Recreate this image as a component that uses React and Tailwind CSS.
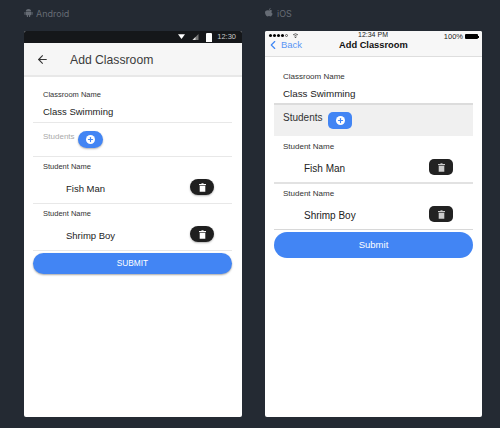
import { ArrowLeft, ChevronLeft, Plus } from "lucide-react";

function AddButton({ className }) {
  return (
    <div className={`flex items-center justify-center bg-[#4285f4] ${className}`}>
      <div className="flex h-[9px] w-[9px] items-center justify-center rounded-full bg-white">
        <Plus className="h-[7px] w-[7px] text-[#4285f4]" strokeWidth={4} />
      </div>
    </div>
  );
}

function TrashIcon({ color }) {
  return (
    <svg viewBox="0 0 10 12" className="h-[9px] w-[7px]" fill={color}>
      <rect x="0" y="1" width="10" height="1.6" />
      <rect x="3.5" y="0" width="3" height="1.5" />
      <path d="M1 3.4h8V12H1z" />
    </svg>
  );
}

function AndroidPhone() {
  return (
    <div className="h-[386px] w-[218px] overflow-hidden rounded-[2px] bg-white">
      <div className="flex h-3 items-center justify-end bg-[#15171a] pr-[6px]">
        <svg viewBox="0 0 10 8" className="h-[6px] w-[7px]"><path d="M0 0h10L5 7z" fill="#fff" /></svg>
        <svg viewBox="0 0 8 8" className="ml-[7px] h-[6px] w-[7px]"><path d="M0 8L8 0v8z" fill="#777" /><path d="M0 8l4-4v4z" fill="#ddd" /></svg>
        <div className="ml-[7px] h-[9px] w-[6px] rounded-t-[1px] bg-white" />
        <span className="ml-[5px] text-[7.5px] leading-none text-[#c8c8c8]">12:30</span>
      </div>
      <div className="flex h-[34px] items-center border-b-2 border-[#e8e8e8] bg-[#f6f6f6] pl-3">
        <ArrowLeft className="h-[13px] w-[13px] text-[#333]" strokeWidth={2} />
        <span className="mt-[2px] ml-[21px] text-[12.2px] font-medium text-[#3b3b3b]">Add Classroom</span>
      </div>
      <div className="flex flex-col pr-[10px] pl-[9px]">
        <div className="flex h-[46px] flex-col justify-end border-b border-[#e8e8e8] pb-[3px] pl-[10px]">
          <span className="text-[7.5px] leading-[12px] text-[#333]">Classroom Name</span>
          <span className="mt-[4px] text-[9.5px] leading-[14px] text-[#222]">Class Swimming</span>
        </div>
        <div className="flex h-[34px] items-start border-b border-[#e8e8e8] pt-[8px] pl-[10px]">
          <span className="text-[8px] leading-[12px] text-[#aaa]">Students</span>
          <AddButton className="ml-[3px] h-[17px] w-[25px] rounded-full shadow-[0_1px_2px_rgba(0,0,0,0.3)]" />
        </div>
        {["Fish Man", "Shrimp Boy"].map((name) => (
          <div key={name} className="h-[47px] border-b border-[#e8e8e8] pt-[4px]">
            <div className="pl-[10px] text-[7.5px] leading-[12px] text-[#333]">Student Name</div>
            <div className="mt-[3px] flex h-[22px] items-center justify-between pr-[18px] pl-[33px]">
              <span className="mt-[4px] text-[9.5px] text-[#222]">{name}</span>
              <div className="flex h-4 w-6 items-center justify-center rounded-full bg-[#1f1f1f] shadow-[0_1px_2px_rgba(0,0,0,0.3)]">
                <TrashIcon color="#fff" />
              </div>
            </div>
          </div>
        ))}
        <div className="mt-[2px] flex h-[21px] items-center justify-center rounded-full bg-[#4285f4] text-[8.3px] text-white shadow-[0_1px_2px_rgba(0,0,0,0.35)]">
          SUBMIT
        </div>
      </div>
    </div>
  );
}

function IosPhone() {
  return (
    <div className="h-[386px] w-[217px] overflow-hidden rounded-[2px] bg-white">
      <div className="relative h-[26px] border-b border-[#dedede] bg-[#f7f7f7]">
        <div className="absolute top-[2px] left-[4px] flex items-center gap-[1px]">
          <span className="h-[3px] w-[3px] rounded-full bg-black" />
          <span className="h-[3px] w-[3px] rounded-full bg-black" />
          <span className="h-[3px] w-[3px] rounded-full bg-black" />
          <span className="h-[3px] w-[3px] rounded-full bg-black" />
          <span className="h-[3px] w-[3px] rounded-full border-[0.5px] border-[#555]" />
          <svg viewBox="0 0 10 8" className="ml-[3px] h-[5px] w-[7px]" fill="none" stroke="#333" strokeWidth="1.2"><path d="M1 3a6 6 0 0 1 8 0M3 5a3 3 0 0 1 4 0" /><circle cx="5" cy="7" r="0.6" fill="#333" /></svg>
        </div>
        <span className="absolute top-0 left-[93px] whitespace-nowrap text-[7px] leading-[8px] text-[#222]">12:34 PM</span>
        <div className="absolute top-[2px] right-[3px] flex items-center gap-[2px]">
          <span className="text-[7.5px] leading-[7px] text-[#222]">100%</span>
          <span className="h-[5px] w-[13px] rounded-[1px] bg-black" />
          <span className="-ml-[2px] h-[2px] w-[1px] bg-black" />
        </div>
        <ChevronLeft className="absolute top-[7px] left-[1px] h-[14px] w-[14px] text-[#3f87f5]" strokeWidth={2} />
        <span className="absolute top-[8px] left-[16px] text-[9.5px] leading-[12px] text-[#5a96f5]">Back</span>
        <span className="absolute top-[8px] left-[74px] text-[9.3px] leading-[12px] font-semibold text-[#111]">Add Classroom</span>
      </div>
      <div className="flex flex-col px-[9px]">
        <div className="flex h-[48px] flex-col justify-end border-b-2 border-[#dcdcdc] pb-[2px] pl-[9px]">
          <span className="text-[8px] leading-[12px] text-[#333]">Classroom Name</span>
          <span className="mt-[4px] text-[9.8px] leading-[14px] text-[#222]">Class Swimming</span>
        </div>
        <div className="flex h-[31px] items-start bg-[#f0f0f0] pt-[6px] pl-[9px]">
          <span className="text-[10px] leading-[13px] text-[#333]">Students</span>
          <AddButton className="mt-[1px] ml-[6px] h-[17px] w-[24px] rounded-[5px]" />
        </div>
        <div className="h-[48px] border-b-2 border-[#e2e2e2] pt-[5px]">
          <StudentRow name="Fish Man" />
        </div>
        <div className="h-[46px] border-b border-[#d8d8d8] pt-[4px]">
          <StudentRow name="Shrimp Boy" />
        </div>
        <div className="mt-[2px] flex h-[26px] items-center justify-center rounded-full bg-[#4285f4] text-[9.5px] text-white">
          Submit
        </div>
      </div>
    </div>
  );
}

function StudentRow({ name }) {
  return (
    <>
      <div className="pl-[9px] text-[8px] leading-[12px] text-[#333]">Student Name</div>
      <div className="mt-[3px] flex h-[22px] items-center justify-between pr-[20px] pl-[30px]">
        <span className="mt-[2px] text-[10px] text-[#222]">{name}</span>
        <div className="flex h-4 w-6 items-center justify-center rounded-[5px] bg-[#222]">
          <TrashIcon color="#ccc" />
        </div>
      </div>
    </>
  );
}

export default function App() {
  return (
    <div className="h-[428px] w-[500px] overflow-hidden bg-[#242a33] pl-[24px] font-['Liberation_Sans',sans-serif]">
      <div className="flex h-[31px] text-[9px] text-[#666c75]">
        <div className="flex w-[241px] items-start pt-[8px]">
          <svg viewBox="0 0 10 10" className="h-[9px] w-[9px]" fill="#666c75"><path d="M2 4a3 3 0 0 1 6 0zM2 4.500h6V8H2zM0.500 4.500h1v3h-1zM8.500 4.500h1v3h-1zM3.200 8h1.200v2H3.200zM5.600 8h1.200v2H5.600z" /></svg>
          <span className="ml-[3px] font-['Inter',sans-serif] leading-[11px]">Android</span>
        </div>
        <div className="flex items-start pt-[8px]">
          <svg viewBox="0 0 10 11" className="h-[9px] w-[8px]" fill="#666c75"><path d="M5 3c1-1 3-1 4 .3-1.500 1-1.200 3 .5 3.700C9 8.500 8 10.500 7 10.500c-.8 0-1.200-.5-2-.5s-1.200.5-2 .5C1.500 10.500 0 7.500 0 5.500 0 3 3 2 5 3zM5 2.500C5 1.200 6 .2 7 0c.1 1.300-.8 2.400-2 2.500z" /></svg>
          <span className="ml-[4px] font-['Inter',sans-serif] leading-[11px]">iOS</span>
        </div>
      </div>
      <div className="flex gap-[23px]">
        <AndroidPhone />
        <IosPhone />
      </div>
    </div>
  );
}
